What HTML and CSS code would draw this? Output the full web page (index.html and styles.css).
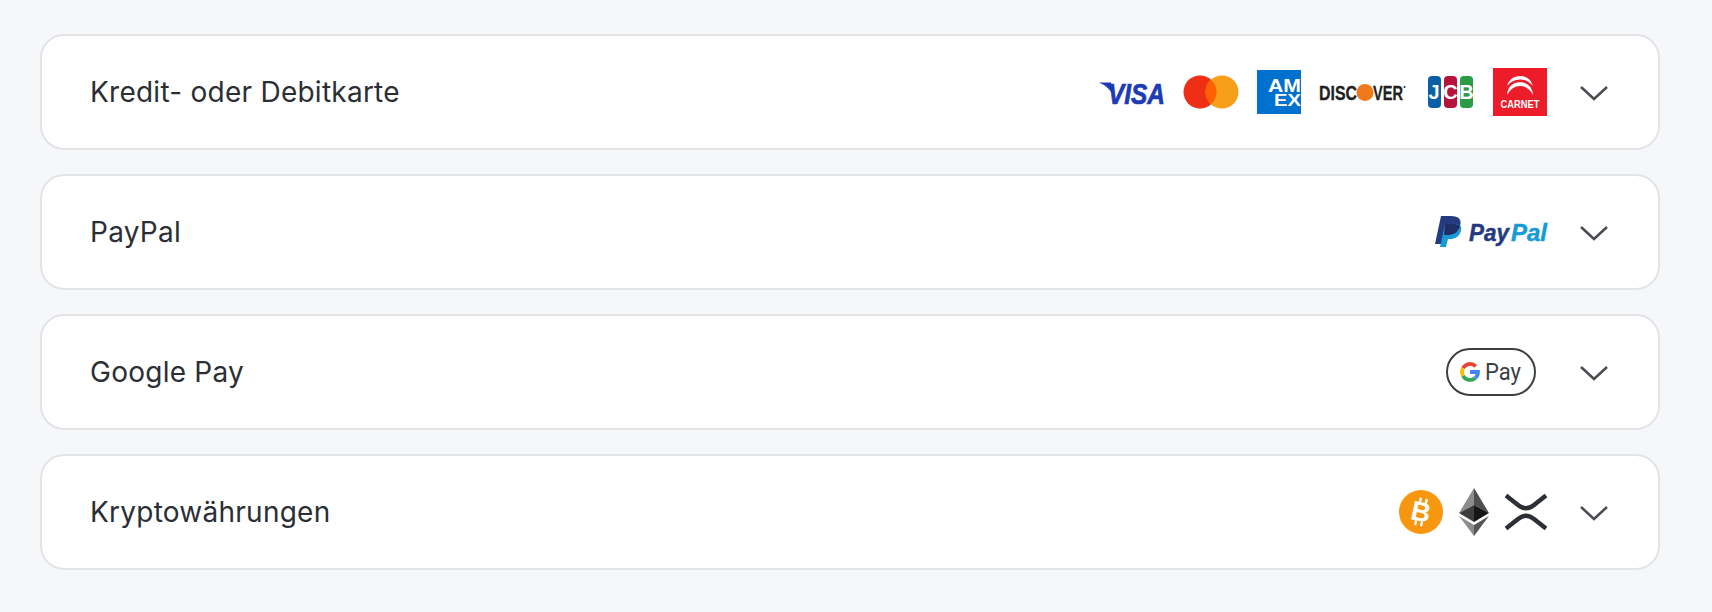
FILE: index.html
```html
<!DOCTYPE html>
<html lang="de">
<head>
    <meta charset="UTF-8">
    <meta name="viewport" content="width=device-width, initial-scale=1.0">
    <title>Zahlungsmethoden</title>
    <link rel="stylesheet" href="styles.css">
</head>
<body>
    <div class="methods">
        <div class="method">
            <span class="method-name">Kredit- oder Debitkarte</span>
            <div class="method-right">
                <div class="logos">
                    <!-- Visa -->
                    <svg class="logo" width="67" height="26" viewBox="0 0 67 26">
                        <path d="M0 3.5 H12 L15 18 Q11 8 0 3.5Z" fill="#1c3bb5"/>
                        <text x="9" y="24.5" class="visa-text" textLength="57" lengthAdjust="spacingAndGlyphs">VISA</text>
                    </svg>
                    <!-- Mastercard -->
                    <svg class="logo" width="57" height="34" viewBox="0 0 57 34">
                        <circle cx="17" cy="17" r="16.5" fill="#ee2f16"/>
                        <circle cx="39" cy="17" r="16.5" fill="#f79e1b"/>
                        <path d="M28 4.7 A16.5 16.5 0 0 1 28 29.3 A16.5 16.5 0 0 1 28 4.7Z" fill="#ff5f00"/>
                    </svg>
                    <!-- Amex -->
                    <svg class="logo logo-clip" width="44" height="44" viewBox="0 0 44 44">
                        <rect width="44" height="44" fill="#0071ce"/>
                        <text x="11" y="21.5" class="amex-text" textLength="33" lengthAdjust="spacingAndGlyphs">AM</text>
                        <text x="17" y="36" class="amex-text amex-small" textLength="27" lengthAdjust="spacingAndGlyphs">EX</text>
                    </svg>
                    <!-- Discover -->
                    <svg class="logo" width="89" height="20" viewBox="0 0 89 20">
                        <text x="1" y="18" class="discover-text" textLength="38" lengthAdjust="spacingAndGlyphs">DISC</text>
                        <circle cx="47" cy="10.5" r="8.5" fill="#ee7a1c"/>
                        <text x="55" y="18" class="discover-text" textLength="30" lengthAdjust="spacingAndGlyphs">VER</text>
                        <circle cx="86.5" cy="5" r="1" fill="#231f20"/>
                    </svg>
                    <!-- JCB -->
                    <svg class="logo" width="52" height="34" viewBox="0 0 52 34">
                        <rect x="4" y="1" width="13" height="32" rx="4" fill="#0b5fa8"/>
                        <rect x="20" y="1" width="13" height="32" rx="4" fill="#b5123c"/>
                        <rect x="36" y="1" width="13" height="32" rx="4" fill="#2a9c46"/>
                        <text x="10" y="24" class="jcb-text">J</text>
                        <text x="26.5" y="24" class="jcb-text">C</text>
                        <text x="42.5" y="24" class="jcb-text">B</text>
                    </svg>
                    <!-- Carnet -->
                    <svg class="logo" width="54" height="48" viewBox="0 0 54 48">
                        <rect width="54" height="48" fill="#ed1c29"/>
                        <path d="M14 27 Q15 15 27 14 Q39 15 40 27 Q35 18 27 18 Q19 18 14 27Z" fill="#fff"/>
                        <path d="M14 18 Q17 8 27 8 Q37 8 40 18 Q35 11.5 27 11.5 Q19 11.5 14 18Z" fill="#fff"/>
                        <text x="27" y="40" class="carnet-text" textLength="39" lengthAdjust="spacingAndGlyphs">CARNET</text>
                    </svg>
                </div>
                <svg class="chevron" width="30" height="30" viewBox="0 0 30 30"><path d="M2 10 L15 22 L28 10"/></svg>
            </div>
        </div>

        <div class="method">
            <span class="method-name">PayPal</span>
            <div class="method-right">
                <div class="logos">
                    <svg class="logo" width="112" height="32" viewBox="0 0 112 32">
                        <path d="M6 0 H16 C24 0 27 4 25 10 C23 17 18 19 12 19 H9 L7 28 H0Z" fill="#253b80"/>
                        <path d="M10 8 H19 C26 8 27 11 26 15 C24 21 20 23 15 23 H13 L11 31 H5Z" fill="#179bd7"/>
                        <path d="M10 8 H19 C22 8 24 9 25 10 C23 17 18 19 12 19 H9Z" fill="#222d65"/>
                        <text x="34" y="25" class="paypal-text pay" textLength="40" lengthAdjust="spacingAndGlyphs">Pay</text>
                        <text x="76" y="25" class="paypal-text pal" textLength="36" lengthAdjust="spacingAndGlyphs">Pal</text>
                    </svg>
                </div>
                <svg class="chevron" width="30" height="30" viewBox="0 0 30 30"><path d="M2 10 L15 22 L28 10"/></svg>
            </div>
        </div>

        <div class="method">
            <span class="method-name">Google Pay</span>
            <div class="method-right">
                <div class="logos">
                    <svg class="logo" width="101" height="48" viewBox="0 0 101 48">
                        <rect x="1" y="1" width="88" height="46" rx="23" fill="#fff" stroke="#3c4043" stroke-width="2"/>
                        <g fill="none" stroke-width="3.8">
                            <path d="M29.7 18.3 A8 8 0 0 0 17 20.2" stroke="#ea4335"/>
                            <path d="M17 20.2 A8 8 0 0 0 17 27.8" stroke="#fbbc04"/>
                            <path d="M17 27.8 A8 8 0 0 0 29 30.2" stroke="#34a853"/>
                            <path d="M29 30.2 A8 8 0 0 0 32 24 H24" stroke="#4285f4"/>
                        </g>
                        <text x="39" y="32" class="gpay-text" textLength="36" lengthAdjust="spacingAndGlyphs">Pay</text>
                    </svg>
                </div>
                <svg class="chevron" width="30" height="30" viewBox="0 0 30 30"><path d="M2 10 L15 22 L28 10"/></svg>
            </div>
        </div>

        <div class="method">
            <span class="method-name">Kryptowährungen</span>
            <div class="method-right">
                <div class="logos logos-crypto">
                    <svg class="logo" width="44" height="44" viewBox="0 0 44 44">
                        <circle cx="22" cy="22" r="22" fill="#f7960f"/>
                        <g transform="rotate(12 22 22)">
                            <text x="22" y="31" class="btc-text">B</text>
                            <path d="M19 8 V13 M25 8 V13 M19 31 V36 M25 31 V36" stroke="#fff" stroke-width="2.4"/>
                        </g>
                    </svg>
                    <svg class="logo" width="32" height="48" viewBox="0 0 32 48">
                        <polygon points="16,0 1,25 16,17" fill="#8c8c8c"/>
                        <polygon points="16,0 31,25 16,17" fill="#4f4f4f"/>
                        <polygon points="1,25 16,17 16,34" fill="#3d3d3d"/>
                        <polygon points="31,25 16,17 16,34" fill="#161616"/>
                        <polygon points="1,28 16,37 16,48" fill="#8c8c8c"/>
                        <polygon points="31,28 16,37 16,48" fill="#565656"/>
                    </svg>
                    <svg class="logo" width="42" height="36" viewBox="0 0 42 36">
                        <g fill="none" stroke="#2b2f36" stroke-width="4.4">
                            <path d="M1 1.5 L13 11 Q21 17.6 29 11 L41 1.5"/>
                            <path d="M1 34.5 L13 25 Q21 18.4 29 25 L41 34.5"/>
                        </g>
                    </svg>
                </div>
                <svg class="chevron" width="30" height="30" viewBox="0 0 30 30"><path d="M2 10 L15 22 L28 10"/></svg>
            </div>
        </div>
    </div>
</body>
</html>
```
FILE: styles.css
```css
body {
    margin: 0;
    padding: 34px 52px 34px 40px;
    background-color: #f6f7f9;
    font-family: Inter, "Liberation Sans", sans-serif;
    color: #2b2e35;
}

.methods {
    display: flex;
    flex-direction: column;
    gap: 24px;
}

.method {
    display: flex;
    justify-content: space-between;
    align-items: center;
    height: 116px;
    box-sizing: border-box;
    padding: 0 49px 0 48px;
    background-color: #fff;
    border: 2px solid #e2e4e8;
    border-radius: 24px;
}

.method-name {
    font-size: 28px;
    line-height: 34px;
    letter-spacing: 0.25px;
}

.method-right {
    display: flex;
    align-items: center;
    gap: 32px;
}

.logos {
    display: flex;
    align-items: center;
    gap: 17px;
}

.logos-crypto {
    gap: 15px;
}

.logo {
    display: block;
    overflow: visible;
}

.logo-clip {
    overflow: hidden;
}

.chevron {
    display: block;
    fill: none;
    stroke: #4a4d52;
    stroke-width: 2.6;
}

.visa-text {
    font: italic 700 29px "Liberation Sans", sans-serif;
    fill: #1c3bb5;
    stroke: #1c3bb5;
    stroke-width: 0.7;
}

.amex-text {
    font: 700 19px "Liberation Sans", sans-serif;
    fill: #fff;
}

.amex-small {
    font-size: 16px;
}

.discover-text {
    font: 700 20px "Liberation Sans", sans-serif;
    fill: #231f20;
    stroke: #231f20;
    stroke-width: 0.3;
}

.jcb-text {
    font: 700 20px "Liberation Sans", sans-serif;
    fill: #fff;
    text-anchor: middle;
}

.carnet-text {
    font: 700 11px "Liberation Sans", sans-serif;
    fill: #fff;
    text-anchor: middle;
}

.paypal-text {
    font: italic 700 24px "Liberation Sans", sans-serif;
    stroke-width: 0.5;
}

.pay {
    fill: #253b80;
    stroke: #253b80;
}

.pal {
    fill: #179bd7;
    stroke: #179bd7;
}

.gpay-text {
    font: 400 24px Roboto, sans-serif;
    fill: #3c4043;
}

.btc-text {
    font: 700 27px "Liberation Sans", sans-serif;
    fill: #fff;
    text-anchor: middle;
}
```
